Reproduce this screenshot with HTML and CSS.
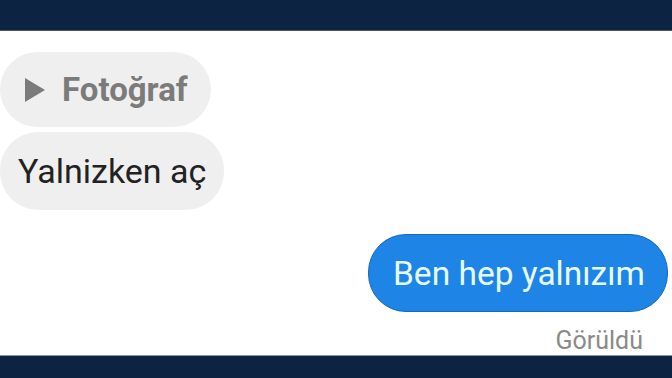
FILE: index.html
```html
<!DOCTYPE html>
<html lang="tr">
<head>
    <meta charset="UTF-8">
    <meta name="viewport" content="width=device-width, initial-scale=1.0">
    <title>Mesajlar</title>
    <link rel="stylesheet" href="styles.css">
</head>
<body>
    <div class="top-bar"></div>

    <div class="chat">
        <div class="bubble incoming photo">
            <svg class="play-icon" width="20" height="24" viewBox="0 0 20 24">
                <polygon points="0,0 20,12 0,24" fill="#7b7b7b"/>
            </svg>
            <span>Fotoğraf</span>
        </div>
        <div class="bubble incoming">Yalnizken aç</div>

        <div class="bubble outgoing">Ben hep yalnızım</div>
        <div class="seen">Görüldü</div>
    </div>

    <div class="bottom-bar"></div>
</body>
</html>
```

FILE: styles.css
```css
body {
    margin: 0;
    width: 672px;
    height: 378px;
    overflow: hidden;
    font-family: Roboto, "Noto Sans", sans-serif;
    background: #ffffff;
    display: flex;
    flex-direction: column;
}

.top-bar {
    height: 30px;
    background: #0c2341;
    border-bottom: 1px solid #4a5668;
}

.bottom-bar {
    height: 22px;
    background: #0c2341;
    border-top: 1px solid #8d95a3;
}

.chat {
    flex: 1;
    display: flex;
    flex-direction: column;
    padding-top: 21px;
}

.bubble {
    display: flex;
    align-items: center;
    box-sizing: border-box;
    border-radius: 38px;
}

.incoming {
    background: #efefef;
    color: #222;
    font-size: 34px;
    margin-bottom: 5px;
}

.photo {
    width: 211px;
    height: 75px;
    padding-left: 25px;
    gap: 17px;
    color: #7b7b7b;
    font-weight: 700;
    font-size: 33px;
}

.play-icon {
    flex-shrink: 0;
}

.incoming:not(.photo) {
    width: 224px;
    height: 78px;
    padding-left: 18px;
}

.outgoing {
    align-self: flex-end;
    width: 300px;
    height: 78px;
    margin-top: 19px;
    margin-right: 4px;
    padding-left: 24px;
    background: #1e84e6;
    color: #e6fbff;
    font-size: 33.5px;
    border: 1px solid #1669b8;
}

.seen {
    align-self: flex-end;
    margin-right: 29px;
    margin-top: 14px;
    color: #8a8a8a;
    font-size: 25px;
}
```
